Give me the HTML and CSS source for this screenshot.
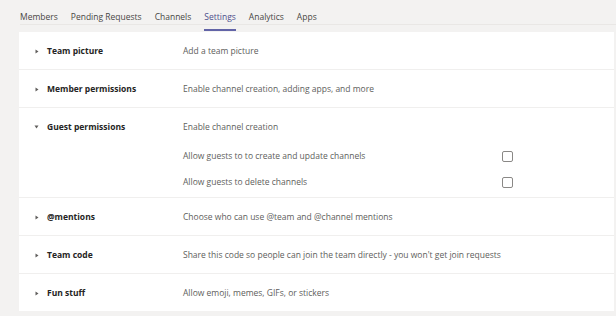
FILE: index.html
```html
<!DOCTYPE html>
<html lang="en">
<head>
    <meta charset="UTF-8">
    <meta name="viewport" content="width=device-width, initial-scale=1.0">
    <title>Team Settings</title>
    <link rel="stylesheet" href="styles.css">
</head>
<body>
    <nav class="tabs">
        <span class="tab">Members</span>
        <span class="tab">Pending Requests</span>
        <span class="tab">Channels</span>
        <span class="tab active">Settings</span>
        <span class="tab">Analytics</span>
        <span class="tab">Apps</span>
    </nav>

    <div class="settings">
        <div class="row">
            <span class="chevron"><svg width="4" height="5" viewBox="0 0 4 5"><path d="M0.5 0.5 L3.5 2.5 L0.5 4.5 Z"/></svg></span>
            <span class="title">Team picture</span>
            <span class="desc">Add a team picture</span>
        </div>
        <div class="row">
            <span class="chevron"><svg width="4" height="5" viewBox="0 0 4 5"><path d="M0.5 0.5 L3.5 2.5 L0.5 4.5 Z"/></svg></span>
            <span class="title">Member permissions</span>
            <span class="desc">Enable channel creation, adding apps, and more</span>
        </div>
        <div class="row expanded">
            <span class="chevron"><svg width="5" height="4" viewBox="0 0 5 4"><path d="M0.5 0.5 L4.5 0.5 L2.5 3.5 Z"/></svg></span>
            <span class="title">Guest permissions</span>
            <div class="desc">
                <div>Enable channel creation</div>
                <ul class="options">
                    <li class="option">
                        <span>Allow guests to to create and update channels</span>
                        <input type="checkbox" class="check">
                    </li>
                    <li class="option">
                        <span>Allow guests to delete channels</span>
                        <input type="checkbox" class="check">
                    </li>
                </ul>
            </div>
        </div>
        <div class="row">
            <span class="chevron"><svg width="4" height="5" viewBox="0 0 4 5"><path d="M0.5 0.5 L3.5 2.5 L0.5 4.5 Z"/></svg></span>
            <span class="title">@mentions</span>
            <span class="desc">Choose who can use @team and @channel mentions</span>
        </div>
        <div class="row">
            <span class="chevron"><svg width="4" height="5" viewBox="0 0 4 5"><path d="M0.5 0.5 L3.5 2.5 L0.5 4.5 Z"/></svg></span>
            <span class="title">Team code</span>
            <span class="desc">Share this code so people can join the team directly - you won't get join requests</span>
        </div>
        <div class="row last">
            <span class="chevron"><svg width="4" height="5" viewBox="0 0 4 5"><path d="M0.5 0.5 L3.5 2.5 L0.5 4.5 Z"/></svg></span>
            <span class="title">Fun stuff</span>
            <span class="desc">Allow emoji, memes, GIFs, or stickers</span>
        </div>
    </div>
</body>
</html>
```

FILE: styles.css
```css
body {
    margin: 0;
    background-color: #f3f2f1;
    font-family: 'Segoe UI', 'Open Sans', sans-serif;
    color: #484644;
}

.tabs {
    display: flex;
    gap: 13px;
    height: 25px;
    box-sizing: border-box;
    margin-left: 20px;
    border-bottom: 1px solid #e9e7e5;
}

.tab {
    padding-top: 10px;
    font-size: 8.5px;
    line-height: 13px;
    color: #484644;
}

.tab.active {
    height: 19px;
    border-bottom: 2px solid #6264a7;
    color: #4d4f8c;
}

.settings {
    margin: 7px 2px 0 19px;
    background-color: #ffffff;
}

.row {
    display: grid;
    grid-template-columns: 28px 136px 1fr;
    align-items: start;
    padding: 12px 0 11px;
    border-bottom: 1px solid #f0efee;
    font-size: 8.5px;
    line-height: 14px;
}

.row.expanded {
    padding-bottom: 2px;
}

.row.last {
    border-bottom: none;
}

.chevron {
    display: flex;
    justify-content: flex-end;
    align-items: center;
    height: 14px;
    padding-right: 8px;
}

.chevron svg {
    fill: #605e5c;
}

.title {
    font-weight: 700;
    color: #252423;
}

.desc {
    color: #605e5c;
}

.options {
    list-style: none;
    margin: 9px 0 0;
    padding: 0;
}

.option {
    display: flex;
    align-items: center;
    justify-content: space-between;
    width: 330px;
    height: 26px;
}

.check {
    appearance: none;
    margin: 0;
    width: 11px;
    height: 11px;
    border: 1px solid #8a8886;
    border-radius: 2px;
    background-color: #ffffff;
}
```
